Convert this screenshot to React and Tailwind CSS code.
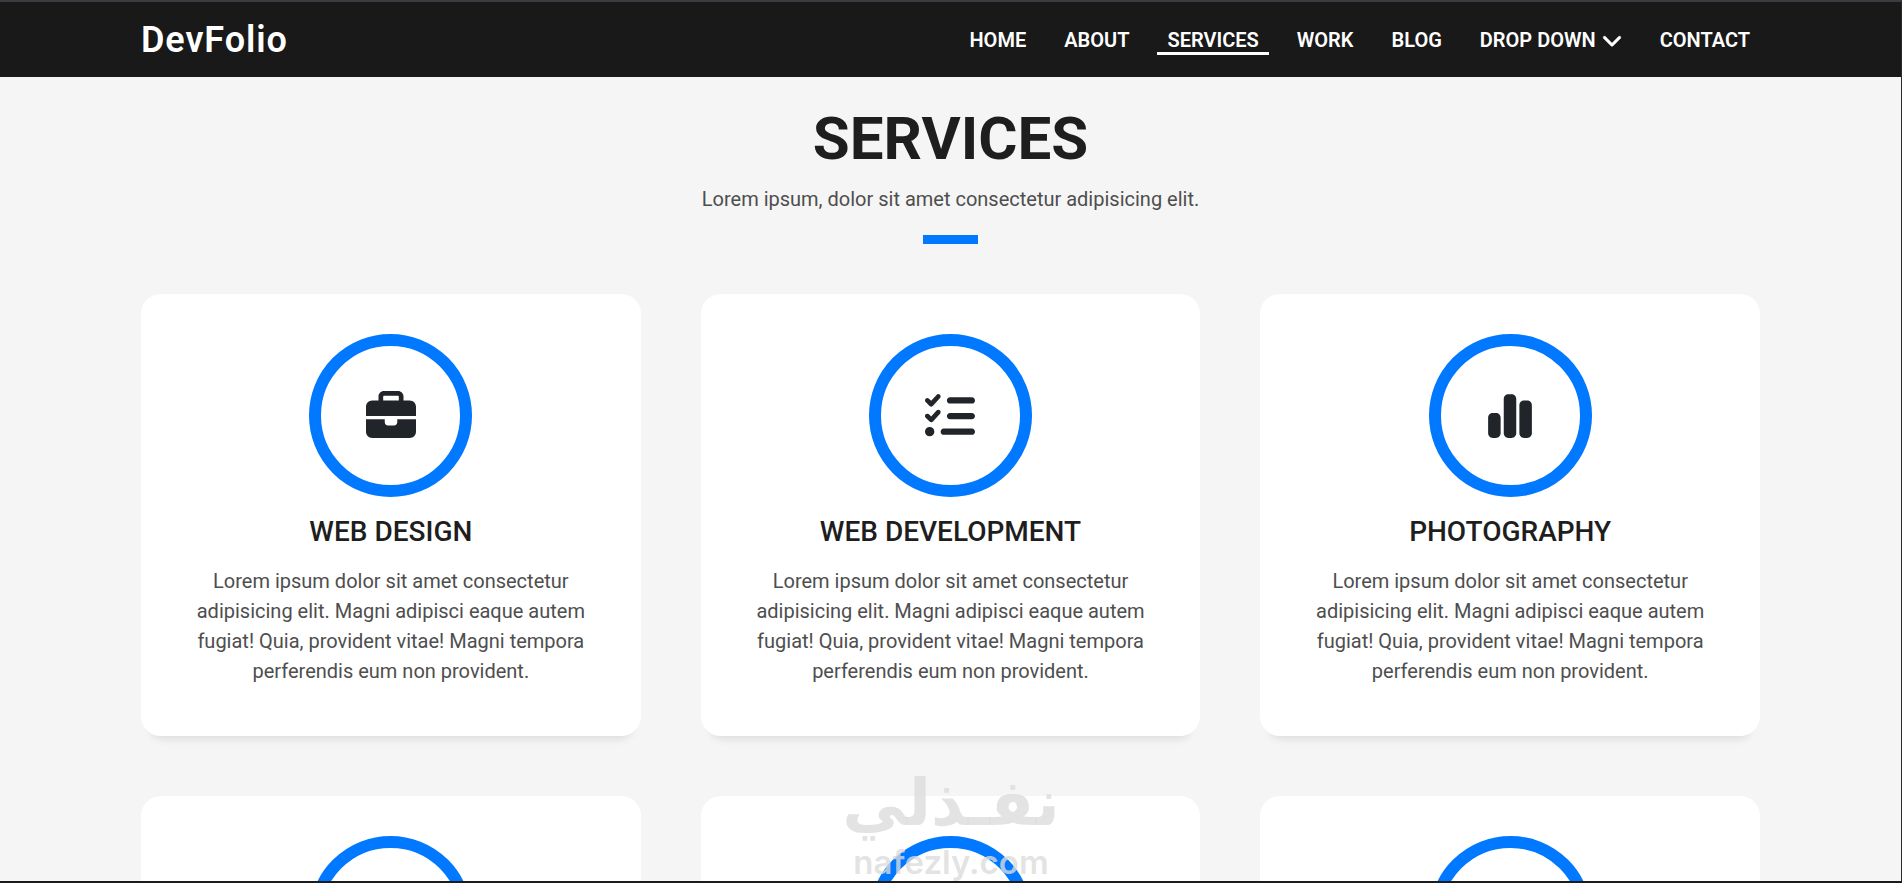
import React, { useState } from 'react';
import { FaBriefcase, FaListCheck, FaChartSimple, FaChevronDown } from 'react-icons/fa6';

const NAV_ITEMS = ['Home', 'About', 'Services', 'Work', 'Blog', 'Drop down', 'Contact'];

const DESCRIPTION =
  'Lorem ipsum dolor sit amet consectetur adipisicing elit. Magni adipisci eaque autem fugiat! Quia, provident vitae! Magni tempora perferendis eum non provident.';

const SERVICES = [
  { title: 'Web Design', icon: FaBriefcase },
  { title: 'Web Development', icon: FaListCheck },
  { title: 'Photography', icon: FaChartSimple },
  { title: 'Web Design', icon: FaBriefcase },
  { title: 'Web Development', icon: FaListCheck },
  { title: 'Photography', icon: FaChartSimple },
];

const Header = ({ active, onSelect }) => (
  <header className="shrink-0 bg-[#191919] text-white">
    <div className="mx-auto flex h-[75px] w-[86%] max-w-[1619px] items-center justify-between">
      <a href="#home" className="text-4xl leading-10 font-semibold tracking-wide">DevFolio</a>
      <nav className="flex gap-[18px]">
        {NAV_ITEMS.map((item) => (
          <a
            key={item}
            href={`#${item.toLowerCase().replace(' ', '-')}`}
            onClick={() => onSelect(item)}
            className={`flex items-center gap-1.5 border-b-3 px-2.5 pt-[3px] text-xl leading-6 font-semibold uppercase ${
              active === item ? 'border-white' : 'border-transparent'
            }`}
          >
            {item}
            {item === 'Drop down' && (
              <FaChevronDown className="h-5 w-5 overflow-visible stroke-current stroke-[16px]" />
            )}
          </a>
        ))}
      </nav>
    </div>
  </header>
);

const ServiceCard = ({ title, icon: Icon }) => (
  <article className="flex flex-col items-center rounded-[20px] bg-white px-10 pt-10 pb-[50px] text-center shadow-[0_13px_8px_-10px_rgba(0,0,0,0.1)]">
    <div className="flex h-[163px] w-[163px] items-center justify-center rounded-full border-12 border-[#0078ff]">
      <Icon className="h-[50px] w-[50px] text-[#212529]" />
    </div>
    <h3 className="mt-[17px] text-[28px] leading-9 font-medium text-[#1e1e1e] uppercase">{title}</h3>
    <p className="mt-4 text-xl leading-[30px] text-[#4e4e4e]">{DESCRIPTION}</p>
  </article>
);

const Watermark = () => (
  <div className="pointer-events-none absolute bottom-0 left-1/2 -translate-x-1/2 text-[#dcdcdc]/80">
    <svg width="216" height="112" viewBox="0 0 216 112" fill="currentColor" className="overflow-visible" aria-hidden="true">
      <text x="108" y="56" textAnchor="middle" direction="rtl" fontSize="64" fontWeight="700" fontFamily="'DejaVu Sans', sans-serif">
        نفـذلي
      </text>
      <text x="108" y="105" textAnchor="middle" fontSize="33" fontWeight="600" fontFamily="Inter, sans-serif">
        nafezly.com
      </text>
    </svg>
  </div>
);

export default function App() {
  const [active, setActive] = useState('Services');

  return (
    <div className="relative flex h-screen flex-col overflow-hidden border-t-2 border-r border-b-2 border-t-[#3b3c41] border-r-[#2a2a2a] border-b-[#1b1b1b] bg-[#f5f5f5] font-[Roboto,sans-serif]">
      <Header active={active} onSelect={setActive} />

      <main className="flex-1 overflow-hidden">
        <section className="mx-auto w-[86%] max-w-[1619px] pt-[26px]">
          {/* Section heading */}
          <div className="flex flex-col items-center text-center">
            <h2 className="text-[60px] leading-[72px] font-bold text-[#1e1e1e] uppercase">Services</h2>
            <p className="mt-[9px] text-xl leading-[30px] text-[#4e4e4e]">
              Lorem ipsum, dolor sit amet consectetur adipisicing elit.
            </p>
            <div className="mt-[21px] h-[9px] w-[55px] bg-[#0078ff]" />
          </div>

          {/* Cards */}
          <div className="mt-[50px] grid grid-cols-3 gap-[60px]">
            {SERVICES.map((service, i) => (
              <ServiceCard key={i} {...service} />
            ))}
          </div>
        </section>
      </main>

      <Watermark />
    </div>
  );
}
